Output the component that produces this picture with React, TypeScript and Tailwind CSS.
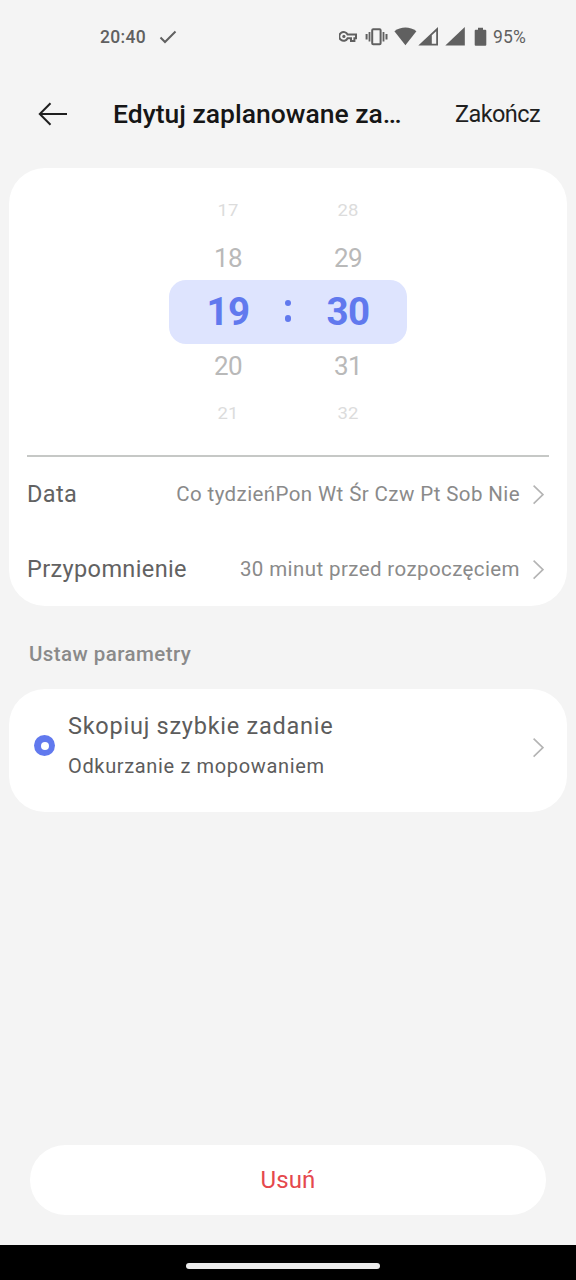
import type { ReactNode } from "react";

type PickerColumnProps = {
  values: string[];
};

function PickerColumn({ values }: PickerColumnProps) {
  const [far, near, selected, next, last] = values;

  return (
    <div className="flex w-[120px] flex-col items-center text-center">
      <div className="h-[42px] origin-center scale-y-[0.9] pt-[2px] text-[18.5px] leading-[42px] text-[#dcdcdc]">
        {far}
      </div>
      <div className="h-[49px] pt-[7px] text-[26px] leading-[42px] tracking-[-0.6px] text-[#b9b9b9]">
        {near}
      </div>
      <div className="h-[65px] text-[38.5px] leading-[65px] font-bold tracking-[-0.6px] text-[#6179ee]">
        {selected}
      </div>
      <div className="h-[48px] text-[26px] leading-[44px] tracking-[-0.6px] text-[#b9b9b9]">
        {next}
      </div>
      <div className="h-[42px] origin-center scale-y-[0.9] pt-px text-[18.5px] leading-[42px] text-[#dcdcdc]">
        {last}
      </div>
    </div>
  );
}

function Chevron() {
  return (
    <svg className="h-5 w-3 shrink-0" viewBox="0 0 12 20" fill="none">
      <path d="M1.6 0.6 10.9 9.6 1.6 18.6" stroke="#b4b4b4" strokeWidth="1.6" />
    </svg>
  );
}

type SettingRowProps = {
  label: string;
  children: ReactNode;
};

function SettingRow({ label, children }: SettingRowProps) {
  return (
    <div className="flex h-[75px] items-center justify-between pr-[5px]">
      <span className="text-[23.5px] tracking-[0.37px] text-[#626262]">{label}</span>
      <span className="flex items-center gap-[12px] text-[20.5px] tracking-[0.4px] text-[#8a8a8a]">
        {children}
        <Chevron />
      </span>
    </div>
  );
}

function StatusBar() {
  return (
    <div className="flex h-[74px] items-center justify-between pr-[50px] pl-[100px] text-[#606060]">
      <div className="flex items-center gap-[13px]">
        <span className="text-[17.5px] font-medium tracking-[0.3px]">20:40</span>
        <svg className="h-[14px] w-[18px]" viewBox="0 0 18 14" fill="none">
          <path d="M1.5 7.5 6 12 16.5 1.5" stroke="currentColor" strokeWidth="2" />
        </svg>
      </div>
      <svg className="ml-auto h-[22px] w-[150px]" viewBox="0 0 150 22" fill="currentColor">
        {/* vpn key */}
        <path
          d="M8.6 8.5H17V12.3H15.4V15H12V12.3H8.6A4.4 4.4 0 1 1 8.6 8.5Z"
          fill="none"
          stroke="currentColor"
          strokeWidth="2"
        />
        <circle cx="4.9" cy="10.4" r="1.6" />
        {/* vibrate */}
        <rect x="33.2" y="3.2" width="8.4" height="15" rx="1" fill="none" stroke="currentColor" strokeWidth="2" />
        <path d="M26.6 8h2v5.6h-2zM29.6 6h1.8v9.6h-1.8zM43.6 6h1.8v9.6h-1.8zM46.5 8h2v5.6h-2z" />
        {/* wifi */}
        <path d="M55.4 5.2C61.8.4 71 .4 77.4 5.2L66.4 19.2Z" />
        {/* signal, partial and full */}
        <path d="M79.3 19.5 99 1.1V19.5ZM92.8 9.2V17.8H97.2V5.2Z" fillRule="evenodd" />
        <path d="M106.3 19.5 125.8 1.1V19.5Z" />
        {/* battery */}
        <path d="M139 1.7h5v2h2.3q1 0 1 1v14q0 1-1 1h-9.6q-1 0-1-1v-14q0-1 1-1H139z" />
      </svg>
      <span className="ml-[4px] text-[17.5px] tracking-[0.2px]">95%</span>
    </div>
  );
}

export default function App() {
  return (
    <div className="flex h-[1280px] w-[576px] flex-col bg-[#f4f4f4] font-[Roboto,sans-serif]">
      <StatusBar />

      <header className="flex h-[80px] items-center pr-[36px] pl-[38px]">
        <svg className="h-6 w-[30px]" viewBox="0 0 30 24" fill="none">
          <path d="M12.5 1.2 1.8 12 12.5 22.8M1.8 12H29" stroke="#1f1f1f" strokeWidth="2" />
        </svg>
        <h1 className="ml-[45px] text-[26.5px] font-medium whitespace-nowrap text-[#161616]">
          Edytuj zaplanowane za…
        </h1>
        <button className="ml-auto pt-px text-[23.5px] tracking-[-0.6px] text-[#1f1f1f]" type="button">
          Zakończ
        </button>
      </header>

      <main className="flex flex-1 flex-col px-[9px] pt-[14px]">
        <section className="h-[438px] rounded-[36px] bg-white px-[18px]">
          <div className="grid h-[289px] place-items-center border-b-2 border-[#c6c8c6]">
            <div className="col-start-1 row-start-1 mt-px h-[64.5px] w-[238px] rounded-[17px] bg-[#dee4fe]" />
            <div className="col-start-1 row-start-1 mb-[2px] flex items-center justify-center">
              <PickerColumn values={["17", "18", "19", "20", "21"]} />
              <PickerColumn values={["28", "29", "30", "31", "32"]} />
            </div>
            <div className="col-start-1 row-start-1 mb-[2px] flex flex-col gap-[9px]">
              <span className="size-[6.5px] rounded-full bg-[#6179ee]" />
              <span className="size-[6.5px] rounded-full bg-[#6179ee]" />
            </div>
          </div>
          <SettingRow label="Data">Co tydzieńPon Wt Śr Czw Pt Sob Nie</SettingRow>
          <SettingRow label="Przypomnienie">30 minut przed rozpoczęciem</SettingRow>
        </section>

        <h2 className="flex h-[83px] items-center pt-[13px] pl-[20px] text-[20.5px] font-medium tracking-[0.43px] text-[#8a8a8a]">
          Ustaw parametry
        </h2>

        <section className="flex h-[123px] items-center rounded-[36px] bg-white pr-[23px] pl-[25px]">
          <span className="mb-[10px] flex size-[21px] items-center justify-center rounded-full bg-[#6179ee]">
            <span className="size-2 rounded-full bg-white" />
          </span>
          <div className="mb-[10px] ml-[13px] flex-1">
            <p className="text-[23.5px] leading-[40px] tracking-[0.75px] text-[#5c5c5c]">
              Skopiuj szybkie zadanie
            </p>
            <p className="text-[20px] leading-[40px] tracking-[0.65px] text-[#5c5c5c]">
              Odkurzanie z mopowaniem
            </p>
          </div>
          <div className="mb-[5px]">
            <Chevron />
          </div>
        </section>

        <button
          className="mx-[21px] mt-auto mb-[30px] h-[70px] rounded-full bg-white text-[24px] tracking-[0.1px] text-[#e5484d]"
          type="button"
        >
          Usuń
        </button>
      </main>

      <footer className="flex h-[35px] items-center justify-center bg-black pt-[6px] pr-[10px]">
        <div className="h-[6px] w-[194px] rounded-full bg-[#ececec]" />
      </footer>
    </div>
  );
}
